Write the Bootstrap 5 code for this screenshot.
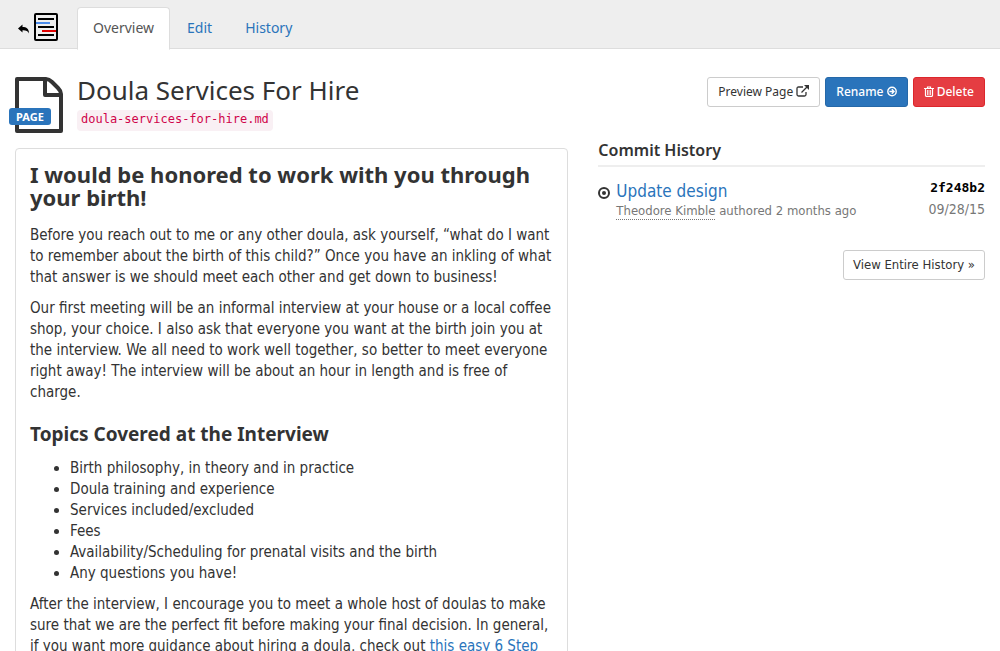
<!DOCTYPE html>
<html lang="en">
<head>
<meta charset="utf-8">
<meta name="viewport" content="width=device-width, initial-scale=1">
<title>Doula Services For Hire</title>
<link href="https://cdn.jsdelivr.net/npm/bootstrap@5.3.0/dist/css/bootstrap.min.css" rel="stylesheet">
<style>
  body { font-family: "DejaVu Sans Condensed", "Noto Sans", sans-serif; font-size: 15px; line-height: 21px; color: #333; }
  h1, h2, h3, .btn-act, .page-tag, .topbar { font-family: "Noto Sans", "Open Sans", sans-serif; }
  a { color: #2a74bb; text-decoration: none; }
  a:hover { text-decoration: underline; }
  .container-fluid, .row { --bs-gutter-x: 30px; }
  .topbar { background: #eee; border-bottom: 1px solid #ddd; padding: 7px 15px 0; }
  .brand { width: 62px; padding: 6px 0 0 2px; }
  .topbar .nav-tabs { border: 0; margin-bottom: -1px; gap: 1px; }
  .topbar .nav-link { font-size: 14px; line-height: 21px; padding: 9px 15px 11px; border-radius: 4px 4px 0 0; color: #2a74bb; }
  .topbar .nav-link.active { color: #555; background: #fff; border-color: #ddd #ddd #fff; }
  .page-head { padding-top: 28px; margin-bottom: 15px; }
  .page-icon { width: 48px; height: 56px; margin-right: 14px; }
  .page-tag { left: -6px; top: 31px; background: #2a74bb; color: #fff; font-size: 11px; line-height: 17px; font-weight: 700; padding: 0 7px; border-radius: 3px; }
  .page-title { font-size: 26px; line-height: 26px; font-weight: 400; margin: 0 0 7px; }
  .file-name { display: block; width: fit-content; font: 12px/17px "DejaVu Sans Mono", monospace; color: #d0044a; background: #f9f0f4; padding: 1px 4px 3px; border-radius: 4px; }
  .head-actions { gap: 5px; }
  .btn-act { font-size: 12px; line-height: 18px; padding: 5px 10px; border-radius: 3px; }
  .btn-plain { background: #fff; border-color: #ccc; color: #333; }
  .btn-blue { background: #2a74bb; border-color: #2568a8; color: #fff; font-weight: 500; }
  .btn-red { background: #e53d42; border-color: #dc262c; color: #fff; font-weight: 500; }
  .btn-act svg { vertical-align: -1px; }
  .btn-history { font-family: "DejaVu Sans Condensed", sans-serif; font-size: 13px; padding: 5px 9px; }
  .doc { border: 1px solid #ddd; border-radius: 4px; padding: 14px; }
  .doc h2 { font-size: 22px; line-height: 23px; font-weight: 700; margin: 0 0 16px; }
  .doc h3 { font-size: 19px; line-height: 20px; font-weight: 700; margin: 21px 0 14px; }
  .doc p, .doc ul { margin: 0 0 10px; }
  .doc ul { padding-left: 40px; }
  .history h2 { font-size: 16px; line-height: 18px; font-weight: 600; margin: -7px 0 13px; padding-bottom: 6px; border-bottom: 2px solid #eee; }
  .commit-mark { width: 12px; height: 12px; margin: 7px 6px 0 0; }
  .commit-title { font-size: 17px; line-height: 22px; }
  .commit-meta { font-size: 13px; line-height: 18px; color: #777; }
  .commit-date { font-size: 14px; line-height: 18px; color: #777; }
  .author { border-bottom: 1px dotted #777; line-height: 16px; display: inline-block; }
  .sha { font: 700 13px/16px "DejaVu Sans Mono", monospace; color: #000; margin-bottom: 4px; }
  .history-more { margin-top: 30px; }
</style>
</head>
<body>
<header class="topbar d-flex">
  <a class="brand flex-shrink-0" href="#" aria-label="Back to site">
    <svg class="d-block" width="42" height="28" viewBox="0 0 42 28">
      <path d="M1 15.500 5.500 11.500V14C9.500 14 12 15.500 12 20.500 11 18 9 17.200 5.500 17.300V19.500Z" fill="#000"/>
      <rect x="18" y="1" width="22" height="26" rx="1" fill="none" stroke="#000" stroke-width="2"/>
      <path d="M21 6h16M21 14h16M21 22h16" stroke="#000" stroke-width="2"/>
      <path d="M19 10h14" stroke="#4a8bea" stroke-width="2"/>
      <path d="M25 18h14" stroke="#e00000" stroke-width="2"/>
    </svg>
  </a>
  <ul class="nav nav-tabs">
    <li class="nav-item"><a class="nav-link active" aria-current="page" href="#">Overview</a></li>
    <li class="nav-item"><a class="nav-link" href="#">Edit</a></li>
    <li class="nav-item"><a class="nav-link" href="#">History</a></li>
  </ul>
</header>

<main class="container-fluid">
  <div class="page-head d-flex align-items-start">
    <div class="page-icon position-relative flex-shrink-0">
      <svg class="d-block" width="48" height="56" viewBox="0 0 48 56" fill="none" stroke="#333" stroke-width="4" stroke-linejoin="round">
        <path d="M2 2H31Q34 2 37 5L43 11Q46 14 46 17V54H2Z"/>
        <path d="M30 2V18H46"/>
      </svg>
      <span class="page-tag position-absolute">PAGE</span>
    </div>
    <div class="flex-grow-1">
      <h1 class="page-title">Doula Services For Hire</h1>
      <span class="file-name">doula-services-for-hire.md</span>
    </div>
    <div class="head-actions d-flex">
      <button type="button" class="btn btn-act btn-plain">Preview Page
        <svg width="13" height="12" viewBox="0 0 13 12" fill="none" stroke="#333"><path d="M7 2H2.500Q1 2 1 3.500V9.500Q1 11 2.500 11H8.500Q10 11 10 9.500V7M5.500 7.500 11 2" stroke-width="1.300"/><path d="M8 0H13V5Z" fill="#333" stroke="none"/></svg></button>
      <button type="button" class="btn btn-act btn-blue">Rename
        <svg width="10" height="11" viewBox="0 0 10 11" fill="none" stroke="#fff" stroke-width="1.400"><circle cx="5" cy="5.500" r="4.200"/><path d="M2.400 5.500H7M4.800 3.300 7 5.500 4.800 7.700"/></svg></button>
      <button type="button" class="btn btn-act btn-red"><svg width="10" height="11" viewBox="0 0 10 11" fill="none" stroke="#fff"><path d="M0 2.500H10M3.500 2.500V1H6.500V2.500M1.500 2.500V9.500Q1.500 10.300 2.300 10.300H7.700Q8.500 10.300 8.500 9.500V2.500M3.800 4V9M6.200 4V9" stroke-width="1.200"/></svg>
        Delete</button>
    </div>
  </div>

  <div class="row">
    <div class="col-7">
      <article class="doc">
        <h2>I would be honored to work with you through your birth!</h2>
        <p>Before you reach out to me or any other doula, ask yourself, “what do I want to remember about the birth of this child?” Once you have an inkling of what that answer is we should meet each other and get down to business!</p>
        <p>Our first meeting will be an informal interview at your house or a local coffee shop, your choice. I also ask that everyone you want at the birth join you at the interview. We all need to work well together, so better to meet everyone right away! The interview will be about an hour in length and is free of charge.</p>
        <h3>Topics Covered at the Interview</h3>
        <ul>
          <li>Birth philosophy, in theory and in practice</li>
          <li>Doula training and experience</li>
          <li>Services included/excluded</li>
          <li>Fees</li>
          <li>Availability/Scheduling for prenatal visits and the birth</li>
          <li>Any questions you have!</li>
        </ul>
        <p>After the interview, I encourage you to meet a whole host of doulas to make sure that we are the perfect fit before making your final decision. In general, if you want more guidance about hiring a doula, check out <a href="#">this easy 6 Step</a></p>
      </article>
    </div>
    <section class="col-5 history">
      <h2>Commit History</h2>
      <div class="d-flex">
        <svg class="commit-mark flex-shrink-0" viewBox="0 0 12 12"><circle cx="6" cy="6" r="5" fill="none" stroke="#333" stroke-width="2"/><circle cx="6" cy="6" r="2" fill="#333"/></svg>
        <div class="flex-grow-1">
          <a class="commit-title d-block" href="#">Update design</a>
          <div class="commit-meta"><span class="author">Theodore Kimble</span> authored 2 months ago</div>
        </div>
        <div class="text-end">
          <div class="sha">2f248b2</div>
          <div class="commit-date">09/28/15</div>
        </div>
      </div>
      <div class="history-more text-end"><a class="btn btn-act btn-plain btn-history" href="#">View Entire History »</a></div>
    </section>
  </div>
</main>
<script src="https://cdn.jsdelivr.net/npm/bootstrap@5.3.0/dist/js/bootstrap.bundle.min.js"></script>
</body>
</html>
